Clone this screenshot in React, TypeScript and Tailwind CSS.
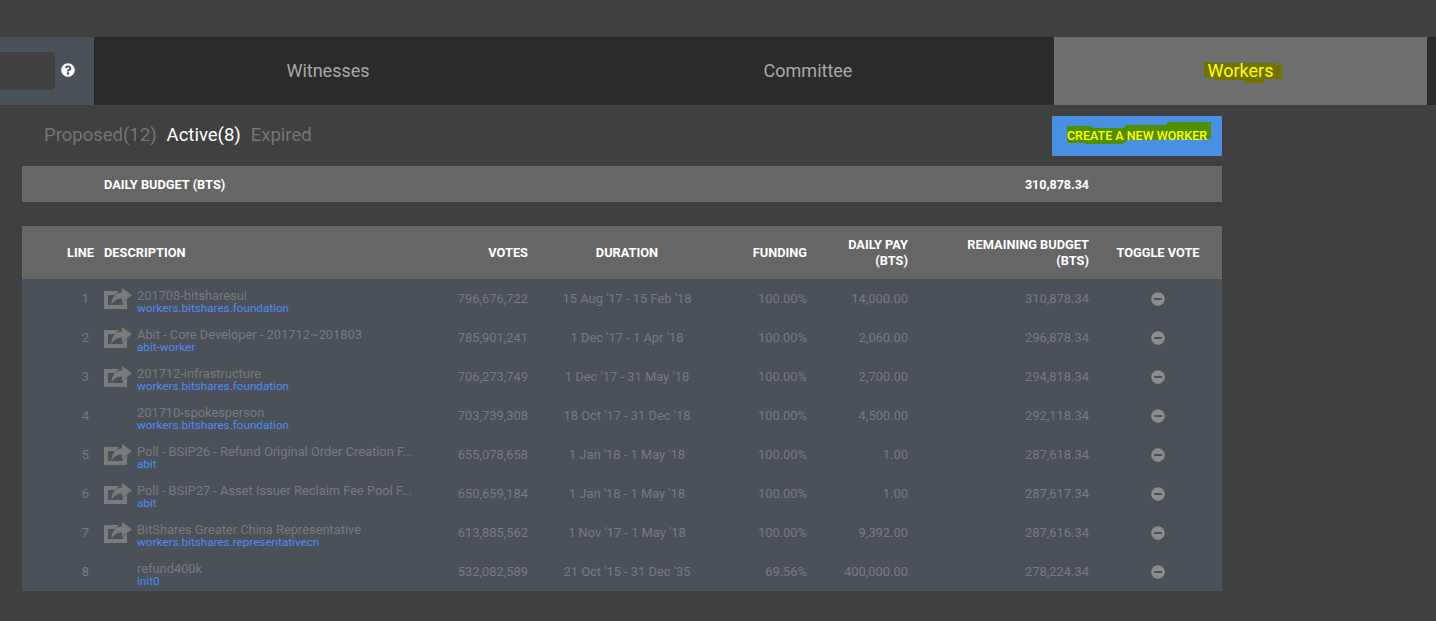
import React from 'react';
import { FaQuestionCircle, FaMinusCircle } from 'react-icons/fa';

const ROWS = [
  { n: 1, title: '201708-bitsharesui', acct: 'workers.bitshares.foundation', votes: '796,676,722', dur: "15 Aug '17 - 15 Feb '18", fund: '100.00%', pay: '14,000.00', rem: '310,878.34', link: true },
  { n: 2, title: 'Abit - Core Developer - 201712~201803', acct: 'abit-worker', votes: '785,901,241', dur: "1 Dec '17 - 1 Apr '18", fund: '100.00%', pay: '2,060.00', rem: '296,878.34', link: true },
  { n: 3, title: '201712-infrastructure', acct: 'workers.bitshares.foundation', votes: '706,273,749', dur: "1 Dec '17 - 31 May '18", fund: '100.00%', pay: '2,700.00', rem: '294,818.34', link: true },
  { n: 4, title: '201710-spokesperson', acct: 'workers.bitshares.foundation', votes: '703,739,308', dur: "18 Oct '17 - 31 Dec '18", fund: '100.00%', pay: '4,500.00', rem: '292,118.34', link: false },
  { n: 5, title: 'Poll - BSIP26 - Refund Original Order Creation F...', acct: 'abit', votes: '655,078,658', dur: "1 Jan '18 - 1 May '18", fund: '100.00%', pay: '1.00', rem: '287,618.34', link: true },
  { n: 6, title: 'Poll - BSIP27 - Asset Issuer Reclaim Fee Pool F...', acct: 'abit', votes: '650,659,184', dur: "1 Jan '18 - 1 May '18", fund: '100.00%', pay: '1.00', rem: '287,617.34', link: true },
  { n: 7, title: 'BitShares Greater China Representative', acct: 'workers.bitshares.representativecn', votes: '613,885,562', dur: "1 Nov '17 - 1 May '18", fund: '100.00%', pay: '9,392.00', rem: '287,616.34', link: true },
  { n: 8, title: 'refund400k', acct: 'init0', votes: '532,082,589', dur: "21 Oct '15 - 31 Dec '35", fund: '69.56%', pay: '400,000.00', rem: '278,224.34', link: false },
];

const COLS = 'grid grid-cols-[72px_334px_100px_198px_81px_101px_181px_133px] items-center';

function ShareIcon() {
  return (
    <svg width="28" height="21" viewBox="0 0 28 21" className="block text-[#7b7b7b]" fill="currentColor">
      <path d="M0 3H15L11 7H4V17H19V14.5L23 11.5V21H0Z" />
      <path d="M18 0L28 7.3L18 14.7V10.5C14 10.5 10 12 7.5 17C7.5 10 11 4.5 18 4.5Z" />
    </svg>
  );
}

export default function App() {
  return (
    <div className="h-[621px] w-[1436px] overflow-hidden bg-[#404040] pt-[37px] font-['Roboto',sans-serif]">
      {/* tabs */}
      <div className="flex h-[68px] bg-[#2b2b2b]">
        <div className="flex w-[94px] items-center bg-[#4a5159]">
          <div className="h-[38px] w-[55px] rounded-r-[4px] bg-[#404040]" />
          <FaQuestionCircle className="mb-[2px] ml-[6px] text-white" size={14} />
        </div>
        <div className="flex w-[468px] items-center justify-center pb-[2px] text-[18px] text-[#a8a8a8]">Witnesses</div>
        <div className="flex w-[492px] items-center justify-center pb-[2px] text-[18px] text-[#a8a8a8]">Committee</div>
        <div className="relative flex w-[373px] items-center justify-center bg-[#6e6e6e] pb-[2px] text-[18px] text-[#ffff00]">
          <svg className="absolute left-[150px] top-[25px]" width="78" height="21" viewBox="0 0 78 21">
            <path d="M0 0H5V1H72V3H78V17H60V21H40V18H10V16H0Z" fill="#727200" />
          </svg>
          <span className="relative">Workers</span>
        </div>
      </div>

      <div className="w-[1222px] pl-[22px]">
        {/* sub tabs */}
        <div className="flex h-[61px] items-start justify-between">
          <div className="flex gap-[10px] pl-[22px] pt-[18px] text-[18.5px] leading-[24px] text-[#757575]">
            <span>Proposed(12)</span>
            <span className="text-white">Active(8)</span>
            <span>Expired</span>
          </div>
          <div className="relative mt-[11px] flex h-[40px] w-[170px] items-center justify-center bg-[#4a90e2] pt-[1px] text-[12.5px] font-medium text-[#ffff00]">
            <svg className="absolute left-[15px] top-[6px]" width="144" height="23" viewBox="0 0 144 23">
              <path d="M0 4H25V6H58V3H100V0H144V17H95V18H60V20H57V22H18V21H0Z" fill="#4f8f00" />
            </svg>
            <span className="relative">CREATE A NEW WORKER</span>
          </div>
        </div>

        {/* budget */}
        <div className={`${COLS} h-[36px] bg-[#666666] pt-[2px] text-[12.8px] font-bold text-white`}>
          <div />
          <div className="pl-[10px]">DAILY BUDGET (BTS)</div>
          <div />
          <div />
          <div />
          <div />
          <div className="text-right text-[12.5px]">310,878.34</div>
          <div />
        </div>

        {/* table */}
        <div className={`${COLS} mt-[24px] h-[53px] bg-[#666666] text-[12.8px] font-bold leading-[16px] text-white`}>
          <div className="text-right">LINE</div>
          <div className="pl-[10px]">DESCRIPTION</div>
          <div className="text-right">VOTES</div>
          <div className="text-center">DURATION</div>
          <div className="text-right">FUNDING</div>
          <div className="text-right">DAILY PAY<br />(BTS)</div>
          <div className="text-right">REMAINING BUDGET<br />(BTS)</div>
          <div className="pl-[5px] text-center">TOGGLE VOTE</div>
        </div>
        <div className="bg-[#4a5159] text-[12.9px] text-[#7a7a7a]">
          {ROWS.map((r) => (
            <div key={r.n} className={`${COLS} h-[39px]`}>
              <div className="pr-[5px] text-right">{r.n}</div>
              <div className="flex items-center pl-[10px]">
                <div className="w-[33px] shrink-0">{r.link && <ShareIcon />}</div>
                <div className="w-[285px] min-w-0 pt-[7px]">
                  <div className="truncate text-[12.85px] leading-[14px]">{r.title}</div>
                  <div className="-mt-[2px] truncate text-[11.7px] leading-[14px] text-[#4d8cf0]">{r.acct}</div>
                </div>
              </div>
              <div className="text-right">{r.votes}</div>
              <div className="text-center">{r.dur}</div>
              <div className="text-right">{r.fund}</div>
              <div className="text-right">{r.pay}</div>
              <div className="text-right">{r.rem}</div>
              <div className="flex justify-center pl-[5px]">
                <FaMinusCircle className="text-[#8c8c8c]" size={14} />
              </div>
            </div>
          ))}
        </div>
      </div>
    </div>
  );
}
